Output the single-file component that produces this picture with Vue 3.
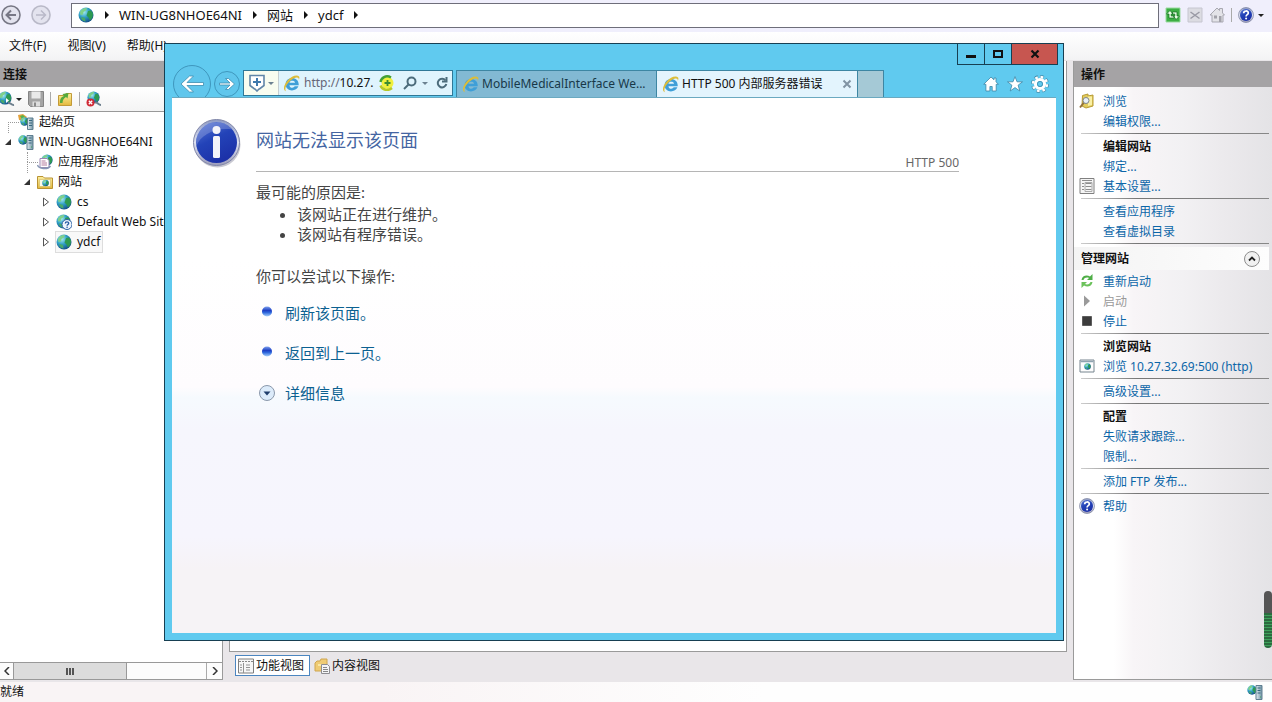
<template>
  <svg class="sprite" aria-hidden="true">
    <defs>
      <radialGradient id="g-globe" cx="0.35" cy="0.3" r="0.8">
        <stop offset="0" stop-color="#a8ecf2" />
        <stop offset="0.45" stop-color="#2f9fc4" />
        <stop offset="1" stop-color="#0f3f7c" />
      </radialGradient>
      <linearGradient id="g-info" x1="0" y1="0" x2="0.5" y2="1">
        <stop offset="0" stop-color="#5a78d6" />
        <stop offset="0.5" stop-color="#2343b8" />
        <stop offset="1" stop-color="#1c31a8" />
      </linearGradient>
      <linearGradient id="g-ring" x1="0" y1="0" x2="0" y2="1">
        <stop offset="0" stop-color="#8d9ac4" />
        <stop offset="0.5" stop-color="#dfe3f2" />
        <stop offset="1" stop-color="#9c9cba" />
      </linearGradient>
      <linearGradient id="g-server" x1="0" y1="0" x2="1" y2="0">
        <stop offset="0" stop-color="#e4edf2" />
        <stop offset="1" stop-color="#6f93a5" />
      </linearGradient>
      <linearGradient id="g-folder" x1="0" y1="0" x2="0" y2="1">
        <stop offset="0" stop-color="#fdf0a0" />
        <stop offset="1" stop-color="#e3b83c" />
      </linearGradient>
      <linearGradient id="g-pearl" x1="0" y1="0" x2="0" y2="1">
        <stop offset="0" stop-color="#7ea2ee" />
        <stop offset="0.4" stop-color="#1d3fc4" />
        <stop offset="0.6" stop-color="#2f67dc" />
        <stop offset="1" stop-color="#a9d3fb" />
      </linearGradient>
    </defs>
    <symbol id="globe" viewBox="0 0 16 16">
      <circle cx="8" cy="8" r="7.5" fill="url(#g-globe)" />
      <path d="M2 5C4 1.5 7 .8 9 1L8 3.500 5.500 5 5 7.500 2.500 8z" fill="#7fd08a" />
      <path d="M10 4l3-.5 2 3-.5 4-2.500 3-1.500-3-2-2z" fill="#2d9a52" />
      <path d="M4 10l3 1 .5 3.500C5 14 3.500 12.500 3 11z" fill="#49a86a" />
    </symbol>
    <symbol id="help" viewBox="0 0 16 16">
      <circle cx="8" cy="8" r="7.500" fill="url(#g-ring)" stroke="#6c7492" stroke-width=".6" />
      <circle cx="8" cy="8" r="6" fill="url(#g-info)" />
      <path d="M5.700 6.300C5.700 3.200 10.400 3.300 10.300 6c0 1.700-2.200 1.700-2.200 3.500" fill="none" stroke="#fff" stroke-width="1.700" />
      <circle cx="8.100" cy="11.600" r="1" fill="#fff" />
    </symbol>
    <symbol id="globe-help" viewBox="0 0 16 16">
      <use href="#globe" width="15" height="15" />
      <circle cx="11" cy="10.500" r="5" fill="#eef4fc" stroke="#2a61a4" />
      <path d="M9.300 9.500c0-2.300 3.500-2.200 3.400-.2 0 1.200-1.600 1.200-1.600 2.400" fill="none" stroke="#2459a2" stroke-width="1.300" />
      <circle cx="11.100" cy="13.200" r=".8" fill="#2459a2" />
    </symbol>
    <symbol id="server" viewBox="0 0 16 16">
      <use href="#globe" x="0" y="1" width="10" height="10" />
      <path d="M9 1.500h6v14H9z" fill="url(#g-server)" stroke="#5e7e90" />
      <path d="M10.500 4h3M10.500 6.500h3M10.500 9h3" stroke="#36677f" />
      <path d="M13 12.500h1v1h-1z" fill="#38a354" />
    </symbol>
    <symbol id="start" viewBox="0 0 16 16">
      <path d="M0 1l5-1 4 3-3 4-5-1z" fill="#e4a23c" />
      <path d="M2 2l3-1 2 2-3 2z" fill="#58b347" />
      <use href="#globe" x="2" y="3" width="9" height="9" />
      <path d="M9.500 4h5.500v11.500H9.500z" fill="url(#g-server)" stroke="#5e7e90" />
      <path d="M11 6.500h3M11 9h3M11 11.500h3" stroke="#36677f" />
    </symbol>
    <symbol id="pool" viewBox="0 0 16 16">
      <use href="#globe" x="4" y="0" width="12" height="12" />
      <path d="M3 4.500h7l2 2v7H3z" fill="#fff" stroke="#9b87b2" />
      <path d="M4.500 7h4M4.500 9h5.500M4.500 11h5.500" stroke="#b37b9c" />
      <path d="M.5 11c1 4 10 5 13 1" fill="none" stroke="#8696b4" stroke-width="1.500" />
    </symbol>
    <symbol id="sites" viewBox="0 0 16 16">
      <path d="M.5 2.500h5.500l1.500 1.500h8v10.500H.5z" fill="url(#g-folder)" stroke="#b99334" />
      <path d="M2.500 5.500h11v7h-11z" fill="#fdfbe9" stroke="#d2b85e" stroke-width=".6" />
      <use href="#globe" x="5" y="5.500" width="7" height="7" />
    </symbol>
    <symbol id="connect" viewBox="0 0 16 16">
      <use href="#globe" x="-2" y="0" width="14" height="14" />
      <path d="M6 7l3 2.500-3 2.500z" fill="#fff" />
      <path d="M8 12.500c2-2 3 2 6 1.500" fill="none" stroke="#6d7f8d" stroke-width="2" />
    </symbol>
    <symbol id="disconnect" viewBox="0 0 16 16">
      <use href="#globe" x="1" y="0" width="13" height="13" />
      <path d="M9 12c2-2 3 2 6 2" fill="none" stroke="#6d7f8d" stroke-width="2" />
      <circle cx="4.500" cy="11.500" r="4" fill="#d02a36" />
      <path d="M2.800 9.800l3.400 3.400M6.200 9.800l-3.400 3.400" stroke="#fff" stroke-width="1.300" />
    </symbol>
    <symbol id="save" viewBox="0 0 16 16">
      <path d="M.5.5h15v15h-13l-2-2z" fill="#a5a5a5" stroke="#858585" />
      <path d="M3.500.5h9v7h-9z" fill="#e9e9e9" />
      <path d="M4.500 10.500h7.500v5H4.500z" fill="#dedede" />
      <path d="M6 11.500h2v4H6z" fill="#8a8a8a" />
    </symbol>
    <symbol id="up-folder" viewBox="0 0 16 16">
      <path d="M1.500 4.500h6l1.500-2h5.500v12h-13z" fill="url(#g-folder)" stroke="#c29a39" />
      <path d="M3 12c0-4 1-6 4-7L5.500 3l6-1-1 5.500-1.500-1.500c-2 1-3.500 3-3.500 6z" fill="#55aa3c" />
    </symbol>
    <symbol id="refresh-page" viewBox="0 0 16 16">
      <path d="M1 1h14v14H1z" fill="#3cae43" stroke="#9adba0" />
      <path d="M1.500 7L5 3.500 8 7H6.200v2H9v2H4V7zM14.500 9L11 12.500 8.500 9h1.300V7H7.500V5H12v4z" fill="#e8ffe4" stroke="#146b23" stroke-width=".7" />
    </symbol>
    <symbol id="stop-page" viewBox="0 0 16 16">
      <path d="M1 1h14v14H1z" fill="#dcdce2" stroke="#c6c6d0" />
      <path d="M3.500 5l9 6.500M12.500 5l-9 6.500" stroke="#9999a4" stroke-width="1.500" />
    </symbol>
    <symbol id="home-grey" viewBox="0 0 16 16">
      <path d="M1 8l7-7 2.500 2.500V1.500h3V6L15.500 8 14 8v7H3V8z" fill="#e3e3e8" stroke="#a8a8b1" />
      <path d="M5 8.500h3v3H5zM10 9h2.500v6H10z" fill="#a2a2aa" />
    </symbol>
    <symbol id="browse" viewBox="0 0 16 16">
      <path d="M3.500 2.500L9 1v2l5-1v11l-7 2-4-2z" fill="#e3cc5c" stroke="#b79b35" />
      <path d="M9 3.500l4 0V12l-4 1z" fill="#faf0a4" />
      <path d="M5 9.500l-4 5" stroke="#937138" stroke-width="2" />
      <circle cx="7" cy="7.500" r="3" fill="#e9f1f8" stroke="#7d858b" />
    </symbol>
    <symbol id="settings" viewBox="0 0 16 16">
      <path d="M1 .5h14v15H1z" fill="#f5f5f5" stroke="#808080" />
      <path d="M3 2.500h10M3 5.500h2M3 8.500h2M3 11.500h2M6.500 5.500h6M6.500 8.500h6M6.500 11.500h6" stroke="#8d8d8d" />
      <path d="M6 4.500h7v9H6z" fill="none" stroke="#aaa" />
    </symbol>
    <symbol id="restart" viewBox="0 0 16 16">
      <path d="M2.500 7C3 2.500 8 1.500 11 3.500L13.500 1v6H8l2-2C8 4 5.500 4.500 4.500 7z" fill="#4fae47" />
      <path d="M13.500 9c-.5 4.500-5.500 5.500-8.500 3.500L2.500 15V9H8l-2 2c2 1 4.500.5 5.500-2z" fill="#6cc25c" />
    </symbol>
    <symbol id="play" viewBox="0 0 16 16"><path d="M5 2.500L11 8l-6 5.500z" fill="#9a9a9a" /></symbol>
    <symbol id="stop" viewBox="0 0 16 16"><path d="M3.500 3.500h9v9h-9z" fill="#3c3c3c" stroke="#5d5d5d" /></symbol>
    <symbol id="browser" viewBox="0 0 16 16">
      <path d="M1 2h14v12H1z" fill="#fdfdfd" stroke="#76858f" />
      <path d="M1.500 3.500h13" stroke="#8fa3b0" stroke-width="1.500" />
      <use href="#globe" x="5" y="5" width="7" height="7" />
    </symbol>
    <symbol id="features" viewBox="0 0 16 16">
      <path d="M.5 1h15v14H.5z" fill="#f7f7f7" stroke="#7f7f7f" />
      <path d="M1 3.500h14" stroke="#888" stroke-dasharray="2 1" />
      <path d="M5.500 5v10M2 7h2M2 9.500h2M2 12h2M8 7h4M8 9.500h4M8 12h4" stroke="#939393" />
    </symbol>
    <symbol id="content" viewBox="0 0 16 16">
      <path d="M1 5l2-2h3l1-2h6v12H1z" fill="#efcb74" stroke="#cfa650" />
      <path d="M4 6h9v2H4z" fill="#fbe8a6" />
      <path d="M7.500 6.500h6l2 2v7h-8z" fill="#f4f4f6" stroke="#8d8d92" />
      <path d="M9 9.500h4M9 11.500h5M9 13.500h5" stroke="#888" />
    </symbol>
    <symbol id="ie" viewBox="0 0 16 16">
      <path d="M14.800 9.600H6.100c.3 3 4 3 4.900 1.100h3.500c-1.700 5.300-12 5.500-12-1.900C2.500.8 15.200.7 14.800 9.600zM6.100 7.200h5.200c-.3-2.500-4.800-2.500-5.200 0z" fill="#3f9fd8" />
      <path d="M2.700 15.200C-2.800 13 5.500.4 12.800.4c3 0 3 2.200 2.100 4.100.1-1.700-1-2.600-3.200-1.800C6 4.700.6 11.700 2.700 15.200z" fill="#dcbd3a" />
    </symbol>
  </svg>

  <div class="manager">
    <header class="topbar">
      <div class="history">
        <button v-for="dir in ['back', 'forward']" :key="dir" class="round" :class="dir" :aria-label="dir">
          <svg width="20" height="20" viewBox="0 0 20 20" fill="none" stroke="currentColor">
            <circle cx="10" cy="10" r="9" stroke-width="1.500" />
            <path v-if="dir === 'back'" d="M15 10H6M10 5.500L5.500 10l4.500 4.500" stroke-width="2" />
            <path v-else d="M5 10h9M10 5.500l4.500 4.500-4.500 4.500" stroke-width="1.500" />
          </svg>
        </button>
      </div>
      <nav class="crumbs">
        <svg class="icon"><use href="#globe" /></svg>
        <template v-for="c in crumbs" :key="c">
          <i class="arrow"></i>
          <button>{{ c }}</button>
        </template>
        <i class="arrow"></i>
      </nav>
      <div class="top-tools">
        <button aria-label="刷新"><svg class="icon"><use href="#refresh-page" /></svg></button>
        <button aria-label="停止加载" disabled><svg class="icon"><use href="#stop-page" /></svg></button>
        <button aria-label="主页" disabled><svg class="icon"><use href="#home-grey" /></svg></button>
        <i class="divider"></i>
        <button aria-label="联机帮助" class="with-caret"><svg class="icon"><use href="#help" /></svg><i class="caret"></i></button>
      </div>
    </header>

    <nav class="menubar">
      <button v-for="m in menus" :key="m">{{ m }}</button>
    </nav>

    <main class="workspace">
      <aside class="panel connections">
        <h2>连接</h2>
        <div class="tree-tools">
          <button aria-label="创建连接"><svg class="icon"><use href="#connect" /></svg><i class="caret"></i></button>
          <button aria-label="保存"><svg class="icon"><use href="#save" /></svg></button>
          <i class="divider"></i>
          <button aria-label="向上"><svg class="icon"><use href="#up-folder" /></svg></button>
          <i class="divider"></i>
          <button aria-label="断开"><svg class="icon"><use href="#disconnect" /></svg></button>
        </div>
        <ul class="tree">
          <li v-for="n in nodes" :key="n.name" :class="['level-' + n.level, n.link]">
            <button v-if="n.toggle" class="toggle" :aria-label="n.name">
              <svg width="8" height="10" viewBox="0 0 8 10">
                <path v-if="n.toggle === 'open'" d="M7 2v6H1z" fill="#333" />
                <path v-else d="M1.500 1l5 4-5 4z" fill="#fff" stroke="#555" />
              </svg>
            </button>
            <span v-else class="toggle"></span>
            <a href="#" :class="{ selected: n.name === current }" @click.prevent="current = n.name">
              <svg class="icon"><use :href="'#' + n.icon" /></svg>{{ n.name }}
            </a>
          </li>
        </ul>
        <div class="hscroll">
          <button aria-label="向左滚动"><svg width="6" height="8" viewBox="0 0 6 8"><path d="M5 0L1 4l4 4" /></svg></button>
          <div class="track"><div class="thumb"><i></i><i></i><i></i></div></div>
          <button aria-label="向右滚动"><svg width="6" height="8" viewBox="0 0 6 8"><path d="M1 0l4 4-4 4" /></svg></button>
        </div>
      </aside>

      <section class="center">
        <div class="canvas"></div>
        <div class="view-tabs">
          <button class="active"><svg class="icon"><use href="#features" /></svg>功能视图</button>
          <button><svg class="icon"><use href="#content" /></svg>内容视图</button>
        </div>
      </section>

      <aside class="panel actions">
        <h2>操作</h2>
        <div class="action-list">
          <template v-for="(a, i) in actions" :key="i">
            <hr v-if="a.type === 'line'" />
            <h3 v-else-if="a.type === 'group'">
              {{ a.text }}
              <button aria-label="折叠">
                <svg width="16" height="16" viewBox="0 0 16 16" fill="none">
                  <circle cx="8" cy="8" r="7.500" fill="#f1f1f1" stroke="#8d8d8d" />
                  <path d="M5 9.500l3-3 3 3" stroke="#222" stroke-width="1.800" />
                </svg>
              </button>
            </h3>
            <h4 v-else-if="a.type === 'title'">{{ a.text }}</h4>
            <div v-else class="action">
              <svg class="icon"><use v-if="a.icon" :href="'#' + a.icon" /></svg>
              <span v-if="a.disabled">{{ a.text }}</span>
              <a v-else href="#" @click.prevent>{{ a.text }}</a>
            </div>
          </template>
        </div>
      </aside>
    </main>

    <footer class="statusbar">
      <span>就绪</span>
      <svg class="icon"><use href="#server" /></svg>
    </footer>

    <div class="meter"></div>

    <section class="browser">
      <div class="caption">
        <button aria-label="最小化"><svg width="12" height="12" viewBox="0 0 12 12"><path d="M1 7h10v3H1z" fill="#111" /></svg></button>
        <button aria-label="最大化"><svg width="12" height="12" viewBox="0 0 12 12"><path d="M2 3h8v6H2z" fill="none" stroke="#111" stroke-width="2" /></svg></button>
        <button aria-label="关闭" class="close"><svg width="12" height="12" viewBox="0 0 12 12"><path d="M2.500 2.500l7 7M9.500 2.500l-7 7" stroke="#111" stroke-width="2.200" /></svg></button>
      </div>
      <div class="navrow">
        <button class="nav-btn" aria-label="后退">
          <svg width="38" height="38" viewBox="0 0 38 38">
            <circle cx="19" cy="19" r="18.500" fill="#60c6ec" stroke="#3f97bd" />
            <path d="M30.500 17.500H14l6.500-6.500h-4L8 19l8.500 8h4L14 20.500h16.500z" fill="#fff" stroke="#3d8db0" stroke-width=".8" />
          </svg>
        </button>
        <button class="nav-btn" aria-label="前进">
          <svg width="26" height="26" viewBox="0 0 26 26">
            <circle cx="13" cy="13" r="12.500" fill="#60c6ec" stroke="#3f97bd" />
            <path d="M5.500 12h10.500l-4.500-4.500H14.500l6 5.500-6 5.500h-3L16 14H5.500z" fill="#fff" stroke="#3d8db0" stroke-width=".8" />
          </svg>
        </button>
        <div class="address">
          <button class="shield" aria-label="安全">
            <svg width="16" height="18" viewBox="0 0 16 18" fill="none">
              <path d="M1 1.500h14v10l-4.500 3.500H10l-2 2-2-2h-.5L1 11.500z" fill="#fff" stroke="#6186a8" stroke-width="1.600" />
              <path d="M8 4v8M4 8h8" stroke="#3f79ad" stroke-width="2" />
            </svg>
            <i class="caret"></i>
          </button>
          <svg class="icon"><use href="#ie" /></svg>
          <label for="url">http://</label>
          <input id="url" v-model="url" type="text" />
          <button aria-label="兼容性视图">
            <svg width="16" height="16" viewBox="0 0 16 16" fill="none">
              <circle cx="8.500" cy="8" r="6" fill="#f1f03c" />
              <path d="M12 2.500C7-.5 2 3 1.500 7" stroke="#43a034" stroke-width="2.400" />
              <path d="M13 13C9 16.500 3 15 1.500 10.500" stroke="#b6c928" stroke-width="2.400" />
              <path d="M8.500 5v6M5.500 8h6" stroke="#3c8c31" stroke-width="1.800" />
            </svg>
          </button>
          <button class="search" aria-label="搜索">
            <svg width="14" height="14" viewBox="0 0 14 14" fill="none" stroke="#4c6c7b" stroke-width="2">
              <circle cx="8.500" cy="5.500" r="4" /><path d="M5.500 8.500L1 13" />
            </svg>
            <i class="caret"></i>
          </button>
          <button aria-label="刷新页面">
            <svg width="12" height="14" viewBox="0 0 12 14" fill="none" stroke="#4c6c7b" stroke-width="2">
              <path d="M9.500 4.500A4.300 4.300 0 1 0 10.300 8" /><path d="M10.500 1v4.500H6" />
            </svg>
          </button>
        </div>
        <div class="tabs">
          <a href="#" class="tab" @click.prevent>
            <svg class="icon"><use href="#ie" /></svg><span>MobileMedicalInterface We...</span>
          </a>
          <div class="tab current">
            <svg class="icon"><use href="#ie" /></svg><a href="#" @click.prevent>HTTP 500 内部服务器错误</a>
            <button aria-label="关闭选项卡">
              <svg width="10" height="10" viewBox="0 0 10 10"><path d="M1.500 1.500l7 7M8.500 1.500l-7 7" stroke="#8193a3" stroke-width="2" /></svg>
            </button>
          </div>
          <button class="new-tab" aria-label="新建选项卡"></button>
        </div>
        <div class="ie-tools">
          <button aria-label="浏览器主页">
            <svg width="16" height="16" viewBox="0 0 16 16">
              <path d="M8 1L.7 8.300h2.200V15h4v-4.500h2.300V15h4V8.300h2.200L13 5.800V2h-2v1.800z" fill="#fff" stroke="#3e87a6" stroke-width=".8" />
            </svg>
          </button>
          <button aria-label="收藏夹">
            <svg width="16" height="16" viewBox="0 0 16 16">
              <path d="M8 .6l2 5.200h5.500l-4.400 3.400 1.700 5.800L8 11.600 3.200 15l1.700-5.800L.5 5.800H6z" fill="#fff" stroke="#3e87a6" stroke-width=".8" />
            </svg>
          </button>
          <button aria-label="工具">
            <svg width="18" height="18" viewBox="0 0 18 18" fill="none">
              <circle cx="9" cy="9" r="7" stroke="#3e87a6" stroke-width="4" stroke-dasharray="3.300 2.200" />
              <circle cx="9" cy="9" r="7" stroke="#fff" stroke-width="2.600" stroke-dasharray="2.700 2.800" stroke-dashoffset="-.3" />
              <circle cx="9" cy="9" r="4.500" stroke="#fff" stroke-width="3.200" />
              <circle cx="9" cy="9" r="2.600" fill="#60caef" stroke="#3e87a6" stroke-width=".8" />
            </svg>
          </button>
        </div>
      </div>

      <article class="page">
        <svg class="info" width="50" height="50" viewBox="0 0 50 50">
          <circle cx="25.500" cy="26.500" r="23" fill="#c9c9d2" />
          <circle cx="24.500" cy="24.500" r="23" fill="url(#g-ring)" stroke="#8086a8" />
          <circle cx="24.500" cy="24.500" r="20.500" fill="url(#g-info)" />
          <path d="M4.500 28C8 18 22 9 40 11.500 33 1 12 1.500 6 15c-2 5-2 9-1.500 13z" fill="#fff" opacity=".2" />
          <circle cx="24.500" cy="12" r="4" fill="#f4f4fa" />
          <rect x="21" y="18" width="7" height="22" rx="1.500" fill="#f4f4fa" />
        </svg>
        <div class="page-body">
          <div class="page-head">
            <h1>网站无法显示该页面</h1>
            <span>HTTP 500</span>
          </div>
          <p>最可能的原因是:</p>
          <ul class="reasons">
            <li>该网站正在进行维护。</li>
            <li>该网站有程序错误。</li>
          </ul>
          <p>你可以尝试以下操作:</p>
          <ul class="tasks">
            <li v-for="t in tasks" :key="t">
              <svg width="16" height="16" viewBox="0 0 16 16">
                <ellipse cx="8" cy="6.500" rx="5" ry="5" fill="url(#g-pearl)" />
              </svg>
              <a href="#" @click.prevent>{{ t }}</a>
            </li>
            <li>
              <svg width="16" height="16" viewBox="0 0 16 16">
                <circle cx="8" cy="8" r="7.500" fill="#dcebfa" stroke="#8a98ab" />
                <path d="M4.500 6.500h7L8 10.500z" fill="#1f3d6b" />
              </svg>
              <a href="#" @click.prevent>详细信息</a>
            </li>
          </ul>
        </div>
      </article>
    </section>
  </div>
</template>

<script setup>
import { ref } from 'vue';

const crumbs = ['WIN-UG8NHOE64NI', '网站', 'ydcf'];
const menus = ['文件(F)', '视图(V)', '帮助(H)'];
const url = ref('10.27.');
const current = ref('ydcf');
const tasks = ['刷新该页面。', '返回到上一页。'];

// link: 点线连接方式
const nodes = [
  { name: '起始页', icon: 'start', level: 0, link: 'dots-down' },
  { name: 'WIN-UG8NHOE64NI', icon: 'server', level: 0, toggle: 'open' },
  { name: '应用程序池', icon: 'pool', level: 1, link: 'dots-through' },
  { name: '网站', icon: 'sites', level: 1, toggle: 'open' },
  { name: 'cs', icon: 'globe', level: 2, toggle: 'closed' },
  { name: 'Default Web Site', icon: 'globe-help', level: 2, toggle: 'closed' },
  { name: 'ydcf', icon: 'globe', level: 2, toggle: 'closed' },
];

const actions = [
  { text: '浏览', icon: 'browse' },
  { text: '编辑权限...' },
  { type: 'line' },
  { type: 'title', text: '编辑网站' },
  { text: '绑定...' },
  { text: '基本设置...', icon: 'settings' },
  { type: 'line' },
  { text: '查看应用程序' },
  { text: '查看虚拟目录' },
  { type: 'line' },
  { type: 'group', text: '管理网站' },
  { text: '重新启动', icon: 'restart' },
  { text: '启动', icon: 'play', disabled: true },
  { text: '停止', icon: 'stop' },
  { type: 'line' },
  { type: 'title', text: '浏览网站' },
  { text: '浏览 10.27.32.69:500 (http)', icon: 'browser' },
  { type: 'line' },
  { text: '高级设置...' },
  { type: 'line' },
  { type: 'title', text: '配置' },
  { text: '失败请求跟踪...' },
  { text: '限制...' },
  { type: 'line' },
  { text: '添加 FTP 发布...' },
  { type: 'line' },
  { text: '帮助', icon: 'help' },
];
</script>

<style>
body { margin: 0; overflow: hidden; }
</style>

<style scoped>
.sprite { position: absolute; width: 0; height: 0; }
.manager { position: relative; display: flex; flex-direction: column; height: 100vh; overflow: hidden; background: #fff; color: #111; font: 12px/20px "Noto Sans", "Noto Sans CJK SC", sans-serif; }
button { display: flex; align-items: center; padding: 0; border: none; background: none; color: inherit; font: inherit; cursor: pointer; }
a { color: inherit; text-decoration: none; }
ul { list-style: none; margin: 0; padding: 0; }
h1, h2, h3, h4, p { margin: 0; font-weight: normal; }
svg { display: block; flex-shrink: 0; }
.icon { width: 16px; height: 16px; }
.caret { border: 3px solid transparent; border-top-color: #222; border-bottom: none; }
.divider { width: 1px; height: 14px; background: #aaa; }

/* 顶部地址栏 */
.topbar { display: flex; align-items: center; height: 30px; padding-bottom: 2px; background: #f0effc; }
.history { display: flex; gap: 10px; width: 71px; padding-left: 1px; box-sizing: border-box; }
.round { border-radius: 50%; background: #e3e3ee; color: #777785; }
.round.forward { color: #b9b9c8; }
.crumbs { flex: 1; display: flex; align-items: center; height: 23px; padding-left: 6px; border: 1px solid #6e6e7a; background: #fff; font-size: 13px; white-space: nowrap; }
.arrow { margin: 0 10px 0 11px; border: 4px solid transparent; border-left-color: #111; border-right: none; }
.top-tools { display: flex; align-items: center; gap: 6px; padding: 0 8px 0 6px; }
.with-caret { gap: 4px; }

.menubar { display: flex; align-items: center; gap: 21px; height: 28px; padding-left: 9px; background: linear-gradient(#fff, #f3f3f4); line-height: 22px; }

.workspace { flex: 1; display: flex; min-height: 0; padding: 1px 0 2px; background: #e9e6e9; }
.panel { display: flex; flex-direction: column; background: #fff; }
.panel h2 { height: 26px; line-height: 27px; background: #a5a3a5; font-size: 12px; font-weight: bold; }

/* 连接 */
.connections { width: 222px; border-right: 1px solid #9a9a9a; }
.connections h2 { padding-left: 3px; }
.tree-tools { display: flex; align-items: center; gap: 6px; height: 24px; border-bottom: 1px solid #999; background: linear-gradient(#fff, #f4f4f4); }
.tree { flex: 1; }
.tree li { display: flex; align-items: center; height: 20px; white-space: nowrap; }
.tree a { display: flex; align-items: center; gap: 5px; }
.tree .selected { padding-right: 2px; background: #f8f8f8; outline: 1px solid #ddd; }
.level-1 { padding-left: 19px; }
.level-2 { padding-left: 38px; }
.toggle { position: relative; justify-content: center; width: 18px; height: 20px; flex-shrink: 0; }
.toggle svg { margin: 0 2px 0 0; }
.dots-down .toggle::before, .dots-through .toggle::before { content: ""; position: absolute; left: 8px; top: 10px; width: 10px; height: 10px; border-left: 1px dotted #999; border-top: 1px dotted #999; }
.dots-through .toggle::after { content: ""; position: absolute; left: 8px; top: 0; height: 10px; border-left: 1px dotted #999; }
.hscroll { display: flex; height: 16px; border-top: 1px solid #999; border-bottom: 1px solid #999; background: #fcfcfc; }
.hscroll button { justify-content: center; width: 13px; }
.hscroll button:last-child { width: 16px; border-left: 1px solid #aaa; }
.hscroll path { fill: none; stroke: #333; stroke-width: 1.500; }
.track { flex: 1; display: flex; }
.thumb { display: flex; align-items: center; justify-content: center; gap: 1px; width: 58%; border: solid #999; border-width: 0 1px; background: #dcdcdc; }
.thumb i { width: 2px; height: 7px; background: #555; }

.center { flex: 1; display: flex; flex-direction: column; padding: 0 6px 4px; }
.canvas { flex: 1; border: 1px solid #9a9a9a; border-top: none; background: #fff; }
.view-tabs { display: flex; gap: 1px; padding: 3px 6px 0; }
.view-tabs button { gap: 2px; height: 21px; padding: 0 5px 0 2px; border: 1px solid transparent; }
.view-tabs .active { background: #fff; border-color: #4c86c0; }

/* 操作 */
.actions { width: 198px; border: solid #9a9a9a; border-width: 0 0 1px 1px; }
.actions h2 { padding-left: 7px; }
.action-list { flex: 1; display: flex; flex-direction: column; padding-top: 4px; background: linear-gradient(90deg, #fff 20%, #f8f5f7 30%, #f2f1f3 55%, #eceaed 75%, #e4e3e6); line-height: 22px; }
.action { display: flex; align-items: center; gap: 8px; height: 20px; padding-left: 5px; white-space: nowrap; }
.action a, .action span { padding-top: 1px; color: #0c66a8; }
.action span { color: #999; }
.actions h4 { height: 20px; padding-left: 29px; font-size: 12px; font-weight: bold; }
.actions h3 { display: flex; align-items: center; justify-content: space-between; height: 23px; margin: 1px 3px 1px 0; padding: 0 9px 0 7px; background: linear-gradient(90deg, #f4f4f4, #fdfdfd); font-size: 12px; font-weight: bold; }
hr { width: auto; height: 1px; margin: 2px 3px 2px 7px; border: none; background: linear-gradient(90deg, #ccc, #777 30%, #888); }

.statusbar { display: flex; align-items: center; justify-content: space-between; height: 20px; padding-right: 9px; background: linear-gradient(90deg, #f9f4f5 30%, #fefefe 60%); line-height: 22px; }
.meter { position: absolute; right: 0; bottom: 54px; width: 8px; height: 57px; border-radius: 4px; background: linear-gradient(#555 22px, transparent 22px), repeating-linear-gradient(#3da25c 0 1px, #2b6b3f 1px 3px); }

/* 浏览器窗口 */
.browser { position: absolute; left: 164px; right: 208px; top: 43px; bottom: 61px; display: flex; flex-direction: column; padding: 0 7px 7px; border: 1px solid #173f52; background: #60caef; }
.caption { display: flex; justify-content: flex-end; height: 26px; margin-right: -2px; }
.caption button { justify-content: center; width: 28px; height: 21px; border: 1px solid #173f52; border-top: none; margin-left: -1px; }
.caption .close { width: 47px; background: #c75650; }
.navrow { display: flex; align-items: center; height: 27px; }
.navrow .icon { width: 17px; height: 17px; }
.nav-btn { margin: 0 3px 0 1px; }
.nav-btn + .nav-btn { margin: 0 3px 0 0; }
.address { display: flex; align-items: center; gap: 4px; align-self: flex-start; width: 208px; height: 24px; border: 1px solid #2f7897; background: #dff4fd; }
.address .caret { border-top-color: #6c8291; }
.address label { color: #667; }
.address input { flex: 1; width: 0; min-width: 0; margin-left: -4px; padding: 0; border: none; outline: none; background: none; color: #111; font: inherit; }
.shield { gap: 3px; height: 24px; padding: 0 4px 0 5px; background: #f8fdf0; border-right: 1px solid #c5cfd2; }
.search { gap: 5px; margin: 0 4px 0 4px; }
.address button:last-child { margin-right: 4px; }
.tabs { flex: 1; display: flex; align-self: stretch; min-width: 0; margin-left: 3px; }
.tab { display: flex; align-items: center; gap: 3px; flex: 0 1 201px; min-width: 0; box-sizing: border-box; padding: 0 5px; border: 1px solid #3d86a3; border-bottom: none; background: #82b9d3; color: #183848; white-space: nowrap; }
.tab span, .tab a { flex: 1; min-width: 0; overflow: hidden; }
.tab.current { border-left: none; background: #e3f4fd; color: #111; }
.new-tab { width: 26px; border: 1px solid #3d86a3; border-width: 1px 1px 0 0; background: #a5c9d6; }
.ie-tools { display: flex; align-items: center; gap: 8px; padding: 0 7px; }

.page { position: relative; flex: 1; display: flex; align-items: flex-start; gap: 14px; padding: 20px 97px 0 20px; border-top: 1px solid #6ba9c0; background: linear-gradient(#fff 30%, #fefcfe 54%, #f6fafe 56%, #f6f6fd 62%, #f6f5fd 82%, #f6f3f6 88%); color: #444; font-size: 15px; }
.page-body { flex: 1; }
.page-head { display: flex; justify-content: space-between; align-items: flex-end; height: 53px; margin-bottom: 10px; border-bottom: 1px solid #b5b5b5; }
h1 { align-self: flex-start; margin-top: 8px; color: #4465a2; font-size: 18px; line-height: 28px; }
.page-head span { color: #666; font-size: 12px; line-height: 16px; }
.reasons { margin: 2px 0 22px; padding-left: 41px; list-style: disc; }
.tasks { margin-top: 7px; }
.tasks li { display: flex; align-items: center; gap: 10px; height: 40px; padding-left: 3px; color: #0c6191; }
</style>
